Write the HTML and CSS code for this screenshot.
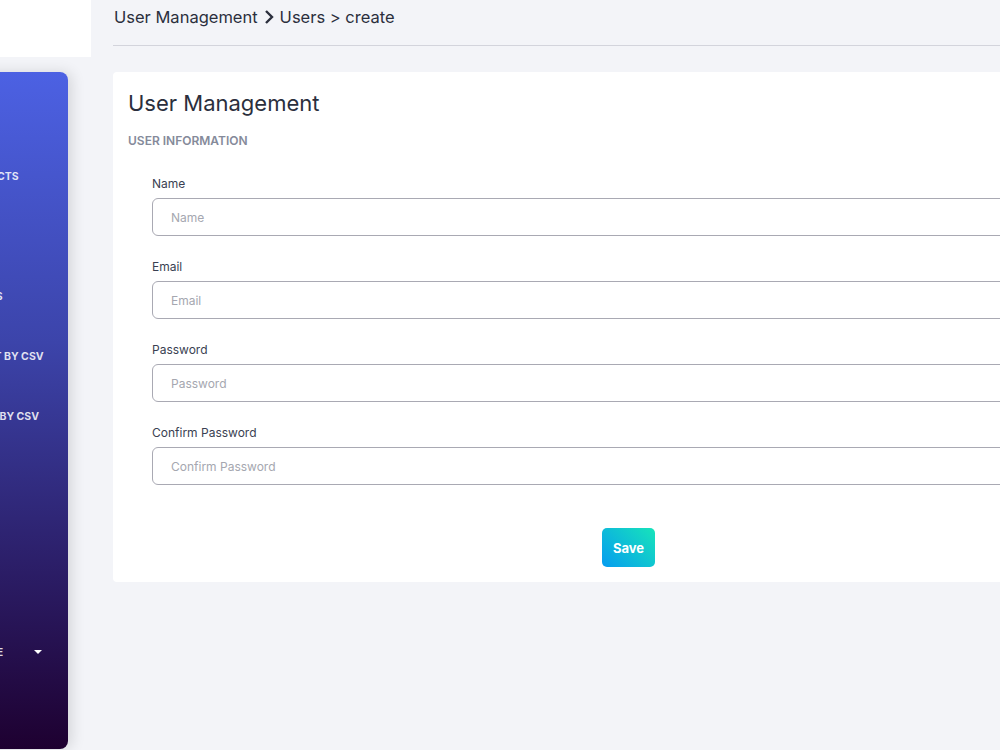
FILE: index.html
```html
<!DOCTYPE html>
<html lang="en">
<head>
<meta charset="UTF-8">
<meta name="viewport" content="width=device-width, initial-scale=1.0">
<title>User Management - create</title>
<link rel="stylesheet" href="styles.css">
</head>
<body>
    <div class="app">
        <!-- Colonne de gauche : logo + menu -->
        <aside class="aside">
            <div class="brand"></div>
            <nav class="sidebar">
                <ul class="menu">
                    <li class="menu-item">Home</li>
                    <li class="menu-item">Products</li>
                    <li class="menu-item">Users</li>
                    <li class="menu-item">Orders</li>
                    <li class="menu-item">Import by csv</li>
                    <li class="menu-item">Stock by csv</li>
                    <li class="menu-item">Roles</li>
                    <li class="menu-item">Logs</li>
                </ul>
                <div class="menu-item profile">
                    <span>Profile</span>
                    <span class="caret"></span>
                </div>
            </nav>
        </aside>

        <!-- Contenu principal -->
        <main class="main">
            <div class="breadcrumb">
                <span>User Management</span>
                <svg class="chevron" width="12" height="16" viewBox="0 0 12 16">
                    <path d="M3 2 L9 8 L3 14" fill="none" stroke="#2b2f3d" stroke-width="2.4"/>
                </svg>
                <span>Users &gt; create</span>
            </div>

            <section class="card">
                <h1 class="card-title">User Management</h1>
                <h6 class="section-title">USER INFORMATION</h6>

                <form class="form">
                    <div class="field">
                        <label for="name">Name</label>
                        <input id="name" type="text" placeholder="Name">
                    </div>
                    <div class="field">
                        <label for="email">Email</label>
                        <input id="email" type="email" placeholder="Email">
                    </div>
                    <div class="field">
                        <label for="password">Password</label>
                        <input id="password" type="password" placeholder="Password">
                    </div>
                    <div class="field">
                        <label for="confirm">Confirm Password</label>
                        <input id="confirm" type="password" placeholder="Confirm Password">
                    </div>
                    <div class="actions">
                        <button type="button" class="btn-save">Save</button>
                    </div>
                </form>
            </section>
        </main>
    </div>
</body>
</html>
```

FILE: styles.css
```css
/* Styles généraux */
body {
    margin: 0;
    padding: 0;
    font-family: Inter, "Noto Sans", sans-serif;
    background-color: #f3f4f8;
    overflow: hidden;
    height: 750px;
}

.app {
    display: flex;
    margin-left: -150px;
    height: 750px;
}

/* Colonne de gauche */
.aside {
    width: 241px;
    flex-shrink: 0;
    display: flex;
    flex-direction: column;
}
.brand {
    height: 57px;
    background-color: #fff;
}
.sidebar {
    margin-top: 15px;
    margin-right: 23px;
    height: 677px;
    display: flex;
    flex-direction: column;
    padding-top: 14px;
    box-sizing: border-box;
    border-radius: 0 8px 8px 0;
    background: linear-gradient(to bottom, #4c61e3 0%, #3c44aa 40%, #2c1f6a 72%, #1e0030 100%);
    box-shadow: 4px 0 14px rgba(0, 0, 0, 0.12);
}
.menu {
    list-style: none;
    margin: 0;
    padding: 0;
}
.menu-item {
    height: 60px;
    display: flex;
    align-items: center;
    padding-left: 110px;
    color: rgba(255, 255, 255, 0.85);
    font-size: 10.5px;
    font-weight: 700;
    text-transform: uppercase;
    white-space: nowrap;
}
.profile {
    margin-top: auto;
    margin-bottom: 67px;
    justify-content: space-between;
    padding-right: 26px;
}
.caret {
    width: 0;
    height: 0;
    border-left: 4px solid transparent;
    border-right: 4px solid transparent;
    border-top: 4px solid #fff;
}

/* Contenu principal */
.main {
    width: 1100px;
    flex-shrink: 0;
    padding-left: 22px;
}
.breadcrumb {
    display: flex;
    align-items: center;
    gap: 5px;
    height: 46px;
    padding: 5px 0 17px 1px;
    box-sizing: border-box;
    border-bottom: 1px solid #d3d4dc;
    font-size: 16.5px;
    line-height: 24px;
    color: #2b2f3d;
}
.breadcrumb .chevron {
    margin-top: 1px;
}

.card {
    margin-top: 26px;
    background-color: #fff;
    border-radius: 4px;
    padding: 16px 15px 15px 15px;
    width: 1031px;
    box-sizing: border-box;
}
.card-title {
    margin: 0;
    font-size: 22px;
    font-weight: 400;
    color: #2b2f3d;
    line-height: 30px;
}
.section-title {
    margin: 15px 0 0 0;
    font-size: 12px;
    font-weight: 600;
    color: #858a9a;
    line-height: 16px;
}

/* Formulaire */
.form {
    padding: 27px 0 0 24px;
}
.field {
    margin-bottom: 23px;
}
.field label {
    display: block;
    font-size: 12px;
    line-height: 16px;
    color: #3a3f52;
    margin-bottom: 6px;
}
.field input {
    display: block;
    width: 100%;
    height: 38px;
    box-sizing: border-box;
    border: 1px solid #a9a9b3;
    border-radius: 6px;
    padding: 0 18px;
    font-family: inherit;
    font-size: 12px;
    color: #333;
}
.field input::placeholder {
    color: #a5a7b0;
}

.actions {
    display: flex;
    justify-content: center;
    padding-top: 20px;
    margin-left: -24px;
}
.btn-save {
    width: 53px;
    height: 39px;
    border: none;
    border-radius: 5px;
    background: linear-gradient(45deg, #069cf0 0%, #17e4ba 100%);
    color: #fff;
    font-family: inherit;
    font-size: 13px;
    font-weight: 700;
    cursor: pointer;
}
```
